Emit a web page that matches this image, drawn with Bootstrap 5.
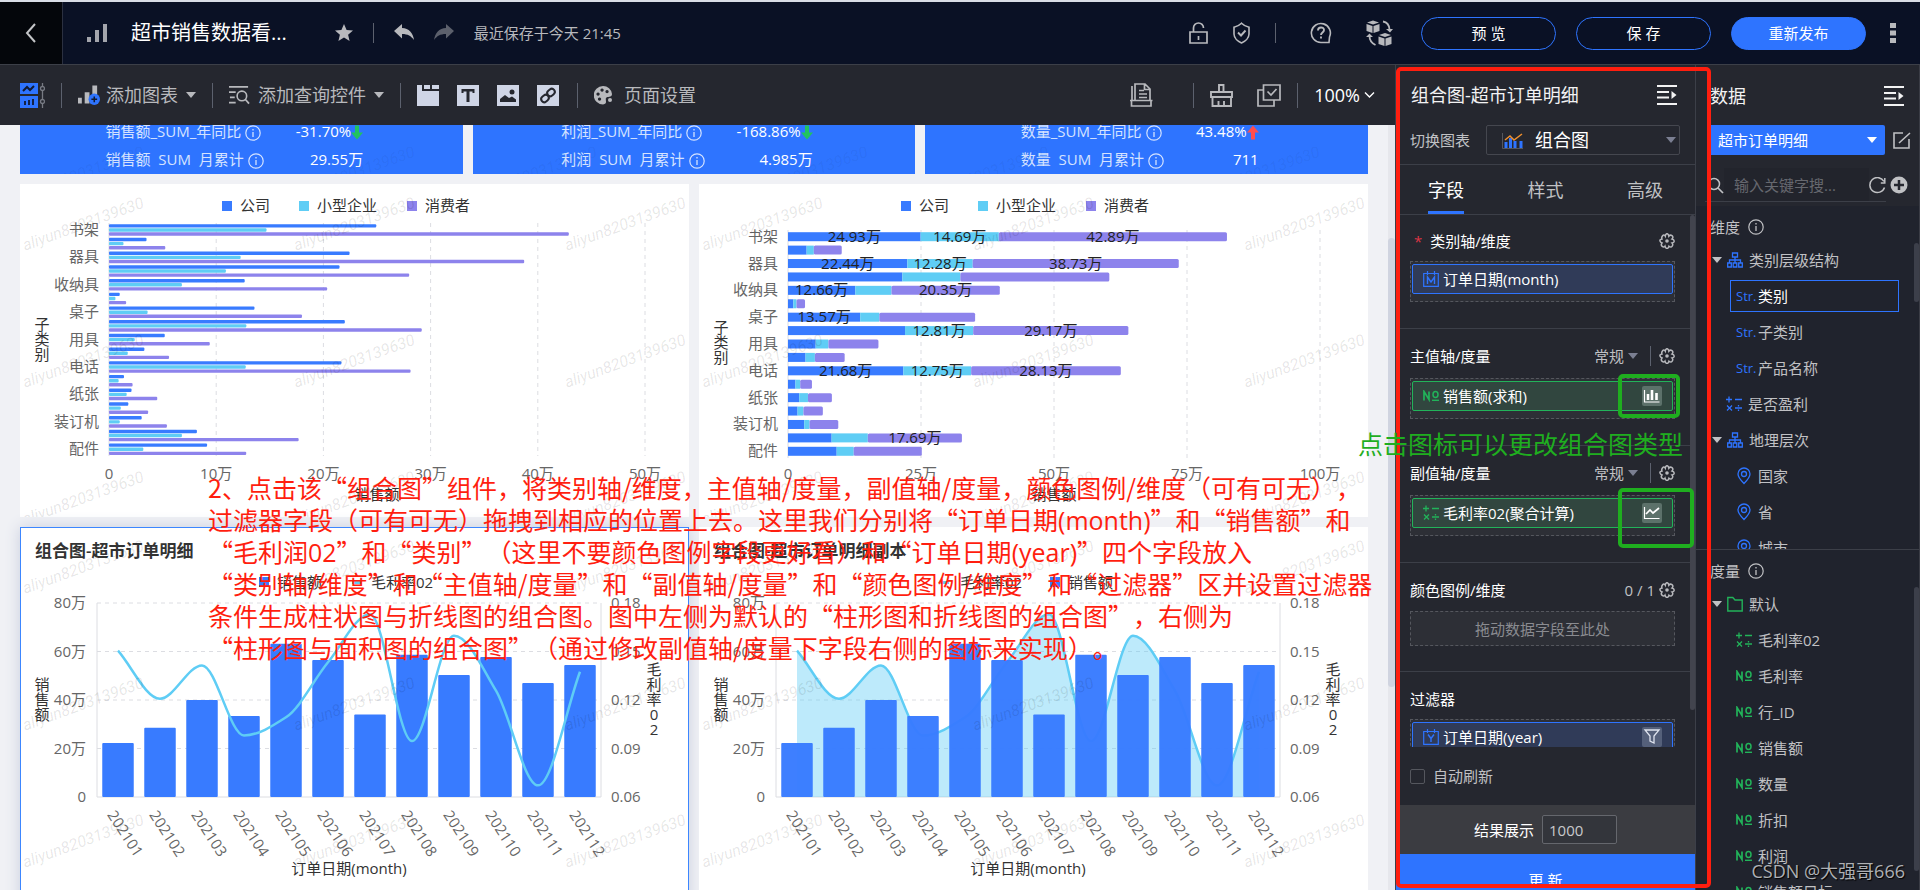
<!DOCTYPE html>
<html lang="zh-CN">
<head>
<meta charset="utf-8">
<meta name="viewport" content="width=device-width, initial-scale=1">
<title>超市销售数据看板</title>
<link href="https://cdn.jsdelivr.net/npm/bootstrap@5.3.0/dist/css/bootstrap.min.css" rel="stylesheet">
<style>
:root{--blue:#2e74ff;--green:#22b35a;--panel:#25272f;--line:#3c3f48;--txt:#c0c1c4}
body{font-family:"Open Sans","Noto Sans CJK SC",sans-serif;font-size:15px;line-height:20px;color:var(--txt);background:#0a1125;height:100vh;overflow:hidden}
button{font:inherit;color:inherit;background:none;border:0;padding:0;line-height:20px}
svg{display:block;flex:none}
.fs-lg{font-size:18px}
.fs-xl{font-size:20px}
.topbar{height:65px;border-top:2px solid #d9dde6;border-bottom:1px solid var(--line);background:#0a1125;color:#b8b9bd}
.back{width:63px;background:#04060b;border-right:1px solid #2b3040}
.vr-line{width:1px;height:20px;background:#5c616e;flex:none}
.gap-l20{margin-left:20px}
.gap-l34{margin-left:34px}
.gap-l40{margin-left:40px}
.ic{margin-right:6px}
.pill{width:135px;height:33px;border:1px solid var(--blue);border-radius:17px;color:#fff}
.pill-fill{background:var(--blue)}
.toolbar{height:60px;background:var(--panel);color:#b8b9bd}
.toolbar .vr-line{height:25px}
.caret{width:0;height:0;border:5px solid transparent;border-top:6px solid currentColor;border-bottom:0;flex:none}
.canvas{background:#f0f1f5;color:#333}
.board{margin:0 27px 0 20px}
.board-row{gap:10px}
.board-grid{gap:10px;grid-template-columns:1fr 1fr;margin-top:10px}
.sheet{background:#fff;height:333px;overflow:hidden}
.sheet-tall{height:400px}
.picked{outline:1px solid #3c86ff;outline-offset:-1px;box-shadow:0 0 14px #c9cede}
.kpi{height:49px;flex:1 1 0;padding-right:14px;background:var(--blue);color:#fff;overflow:hidden}
.kpi-rows{column-gap:32px;grid-template-columns:auto auto;grid-auto-rows:28px;align-items:center;margin-top:-8px}
.kpi-rows > span{height:20px}
.kpi-name{color:#d5e3ff}
.vscroll{right:0;top:0;bottom:0;width:7px;background:#e6e7ec}
.vscroll i{display:block;margin-top:113px;height:449px;border-radius:4px;background:#d0d4e0}
.note{font:25px/32px "Noto Sans CJK SC",sans-serif;font-kerning:none;text-spacing-trim:space-all;font-feature-settings:"chws" 0,"halt" 0;white-space:nowrap;pointer-events:none}
.note div{height:32px}
.note span{font-family:"Open Sans",sans-serif}
.note-red{left:208px;top:346px;color:#ff1e0f;z-index:3}
.note-green{right:12px;top:362px;color:#1fae1f;z-index:6}
.frame-red{left:0;right:-16px;top:2px;bottom:2px;border:4px solid #ff1e0f;border-radius:5px;z-index:5;pointer-events:none}
.frame-green{border:4px solid #1fae1f;border-radius:5px;z-index:6;pointer-events:none}
.frame-a{right:15px;top:309px;width:62px;height:44px}
.frame-b{right:1px;top:423px;width:76px;height:60px}
.conf{width:301px;background:var(--panel);border-left:1px solid var(--line);border-right:1px solid var(--line);flex:none}
.pane-head{height:60px;padding:0 18px 0 15px;color:#f2f2f3}
.switch-row{height:40px;padding:0 15px 9px 14px;border-bottom:1px solid var(--line)}
.pick{appearance:none;border:1px solid #45474f;border-radius:2px;background:transparent;color:#fff;height:30px;width:100%}
.pick option{color:#000}
.tabs{height:50px;border-bottom:1px solid var(--line);padding:0 32px}
.tabs button{border-bottom:3px solid transparent;padding-top:4px}
.tabs .on{color:#fff;border-color:var(--blue)}
.secs{overflow:hidden}
.sec-list{margin-right:5px}
.sec{border-bottom:1px solid var(--line);padding:16px 15px 0 14px;height:117px}
.sec-first{height:114px;padding-top:15px}
.sec-mid{height:109px}
.sec-head{height:22px;color:#fff;margin-bottom:11px}
.sec-tight .sec-head{margin-bottom:9px}
.zone{border:1px dashed #55575e;background:#2d2f36;height:41px;padding:2px 1px}
.zone-flat{height:35px;color:#8a8b90;line-height:31px;text-align:center;margin-top:-1px}
.chip{height:30px;border:1px solid var(--blue);border-radius:2px;background:#303b58;color:#fff;padding:0 10px}
.chip-g{border-color:var(--green);background:#31463f}
.chip-btn{width:20px;height:20px;background:#5c716a;border-radius:2px}
.chip-btn-b{background:#55607a}
.conf-bar{right:0;top:150px;width:5px;height:495px;background:#42444e;border-radius:3px}
.refresh{height:58px;padding:0 14px}
.box{appearance:none;width:15px;height:15px;border:1px solid #55575e;border-radius:2px;margin:0}
.result{height:49px;background:#3b3c41;color:#fff}
.num{width:75px;height:29px;border:1px solid #65676d;border-radius:2px;background:#33353b;color:#c8c9cc;padding:0 6px}
.update{height:36px;background:var(--blue);color:#fff;overflow:hidden;padding-top:15px}
.data{width:224px;background:var(--panel);flex:none;border-right:1px solid #3a3c45}
.data .pane-head{padding:2px 15px 0 14px}
.source{background:var(--blue);border:0;padding:0 10px}
.search{height:46px;margin-top:7px}
.search input{border:0;background:#22242c;color:#fff;width:145px;height:34px;padding:0 10px;outline:0}
.search input::placeholder{color:#66686f;opacity:1}
.search-line{border-bottom:1px solid var(--line);margin:-7px 33px 4px 9px}
.tree{background:#20232d;overflow:hidden}
.tree-dim{height:344px;flex:none;border-bottom:1px solid var(--line)}
.tree-head{height:36px;padding:6px 14px 0}
.tree ul{list-style:none;margin:0;padding:0}
.tree li{height:36px;padding-left:16px}
.tree li.l2{padding-left:40px}
.tree li.l1{padding-left:30px}
.tree .sel{height:32px;margin:2px 20px 2px 34px;padding-left:5px;border:1px solid var(--blue);color:#fff}
.tree .caret{margin-right:5px}
.ty{width:16px;font-size:13px;color:var(--blue);white-space:nowrap;flex:none}
.tree-bar{right:0;width:5px;background:#3c3f4a;border-radius:3px}
.bar-a{top:37px;height:59px}
.bar-b{top:37px;height:284px}
.credit{right:14px;bottom:9px;font-size:18px;color:#aeb0b4;text-shadow:1px 1px 1px #000}
.blue{color:var(--blue)}
.green{color:var(--green)}
.dim{color:#7b7f92}
</style>
</head>
<body class="d-flex flex-column">
<svg class="d-none">
 <symbol id="gear" viewBox="0 0 16 16"><path d="M6.300 3.200Q5 1 3.600 2.800T3 6Q.5 6.500 1 8t2 2Q1.500 12 3.200 13.400T6 13.200Q6.500 15.400 8 15.400T10 13.200Q12 15 13.200 13.200T13 10Q15.400 9.500 15.200 8T13 6Q14.800 4 13 2.700T9.800 3.200Q9.500.7 8 .7T6.300 3.200z" fill="none" stroke="currentColor" stroke-width="1.500"/><circle cx="8" cy="8" r="1.800" fill="currentColor"/></symbol>
 <symbol id="fold" viewBox="0 0 20 20"><path d="M0 1h20M0 7h12M0 12.500h12M0 19h20" stroke="currentColor" stroke-width="1.800" fill="none"/><path d="M14.500 6v8l5-4z" fill="currentColor"/></symbol>
 <symbol id="info" viewBox="0 0 16 16"><circle cx="8" cy="8" r="7.200" fill="none" stroke="currentColor" stroke-width="1.200"/><path d="M8 7v5M8 4v1.500" stroke="currentColor" stroke-width="1.300"/></symbol>
 <symbol id="calc" viewBox="0 0 16 16"><path d="M0 3.500h6M3 .5v6M9 3.500h7M1 9.500l5 5M6 9.500l-5 5M9 12h7M12.500 9v1.500M12.500 13.500v1.500" stroke="currentColor" stroke-width="1.300" fill="none"/></symbol>
 <symbol id="tree" viewBox="0 0 16 16"><path d="M5.500 1h5v4h-5zM.7 11h3.600v4H.7zM6.200 11h3.600v4H6.200zM11.700 11h3.600v4h-3.600zM8 5v6M2.500 11V8h11v3" stroke="currentColor" stroke-width="1.300" fill="none"/></symbol>
 <symbol id="pin" viewBox="0 0 16 18"><path d="M8 16.500C4 12.500 2 10 2 7a6 6 0 0 1 12 0c0 3-2 5.500-6 9.500z" stroke="currentColor" stroke-width="1.300" fill="none"/><circle cx="8" cy="7" r="2.500" stroke="currentColor" stroke-width="1.300" fill="none"/></symbol>
 <symbol id="no" viewBox="0 0 16 12"><path d="M1 10.500V1.500l5 8V1.500" stroke="currentColor" stroke-width="1.700" fill="none"/><ellipse cx="12.500" cy="4.500" rx="2.500" ry="3" stroke="currentColor" stroke-width="1.500" fill="none"/><path d="M9 10.300h7" stroke="currentColor" stroke-width="1.400"/></symbol>
 <symbol id="cal" viewBox="0 0 16 16"><path d="M.7 2.500h14.600v12.800H.7zM4.500 0v4M11.500 0v4" stroke="currentColor" stroke-width="1.200" fill="none"/></symbol>
 <symbol id="down" viewBox="0 0 12 14"><path d="M4 0h4v7h4l-6 7-6-7h4z" fill="currentColor"/></symbol>
 <symbol id="up" viewBox="0 0 12 14"><path d="M4 14h4V7h4L6 0 0 7h4z" fill="currentColor"/></symbol>
</svg>

<header class="topbar d-flex align-items-center flex-shrink-0">
 <button class="back h-100 d-flex align-items-center justify-content-center" aria-label="返回"><svg width="12" height="20" viewBox="0 0 12 20"><path d="M10 1L2 10l8 9" fill="none" stroke="#c4c5c8" stroke-width="2"/></svg></button>
 <svg class="ms-4" width="20" height="18" viewBox="0 0 20 18" fill="#a3a5ac"><path d="M0 13h4v5H0zM8 6h4v12H8zM16 0h4v18h-4z"/></svg>
 <span class="fs-xl text-white ms-4">超市销售数据看...</span>
 <button class="ms-5" aria-label="收藏"><svg width="18" height="18" viewBox="0 0 18 18"><path d="M9 0l2.600 6 6.400.5-4.900 4.200 1.500 6.300L9 13.600 3.400 17l1.500-6.300L0 6.500 6.400 6z" fill="currentColor"/></svg></button>
 <span class="vr-line gap-l20 me-3"></span>
 <button class="ms-1" aria-label="撤销"><svg width="20" height="18" viewBox="0 0 20 18"><path d="M8 0v4c7 0 11 5 12 12-3-4-6-6-12-6v4.500L0 7z" fill="currentColor"/></svg></button>
 <button class="gap-l20" aria-label="重做"><svg width="20" height="18" viewBox="0 0 20 18"><path d="M12 0v4C5 4 1 9 0 16c3-4 6-6 12-6v4.500L20 7z" fill="#5c606c"/></svg></button>
 <span class="gap-l20">最近保存于今天 21:45</span>
 <div class="ms-auto d-flex align-items-center">
  <svg width="19" height="22" viewBox="0 0 19 22"><path d="M1 10h17v11H1zM4.500 10V6a5 5 0 0 1 10 0M9.500 14v4" fill="none" stroke="currentColor" stroke-width="1.700"/></svg>
  <svg class="ms-4" width="19" height="22" viewBox="0 0 19 22"><path d="M9.500 1.200c2 2 4.500 3.300 7.500 4V12c0 4-4 7.500-7.500 9C6 19.500 2 16 2 12V5.200c3-.7 5.500-2 7.500-4z" fill="none" stroke="currentColor" stroke-width="1.600"/><path d="M6 10.500l3 3 4.500-5" fill="none" stroke="currentColor" stroke-width="1.900"/></svg>
  <span class="vr-line ms-4"></span>
  <svg class="gap-l34" width="22" height="22" viewBox="0 0 22 22"><path d="M19 20.500h-8a9.500 9.500 0 1 1 8.500-5.500z" fill="none" stroke="currentColor" stroke-width="1.600"/><path d="M8 8.500c0-4 6-4 6-.5 0 2.500-3 2.500-3 5M11 14.500v2" fill="none" stroke="currentColor" stroke-width="1.900"/></svg>
  <svg class="gap-l34 me-4" width="27" height="26" viewBox="9 0 27 26"><g fill="currentColor"><path d="M10 2.500l6-2 6 2-6 2zM9.500 4l6 2v7l-6-2zM22.500 4l-6 2v7l6-2zM22 15l6-2 6 2-6 2zM21.500 16.500l6 2V26l-6-2zM34.500 16.500l-6 2V26l6-2z"/><path d="M29 9h7l-3 3.500zM9 17h7l-3.500-3.500z"/></g><path d="M26 1.500q6 1 6.500 8M12.500 16q0 6 6 9" fill="none" stroke="currentColor" stroke-width="1.800"/></svg>
  <button class="pill ms-1">预 览</button>
  <button class="pill gap-l20">保 存</button>
  <button class="pill pill-fill gap-l20">重新发布</button>
  <button class="mx-4" aria-label="更多"><svg width="6" height="20" viewBox="0 0 6 20" fill="currentColor"><path d="M0 0h6v5H0zM0 7.500h6v5H0zM0 15h6v5H0z"/></svg></button>
 </div>
</header>

<div class="d-flex flex-grow-1 overflow-hidden">
<main class="flex-grow-1 d-flex flex-column overflow-hidden">
 <div class="toolbar d-flex align-items-center ps-3 pe-3 fs-lg flex-shrink-0">
  <svg class="ms-1" width="25" height="25" viewBox="0 0 25 25"><path d="M0 0h18v11H0zM0 13h18v12H0z" fill="#2e74ff"/><path d="M3 8l4-4 3 3 4-4" fill="none" stroke="#111a33" stroke-width="2"/><path d="M5 18v4M9 17v5M13 16v6" stroke="#111a33" stroke-width="1.800"/><path d="M22.500 0v25" stroke="#777a83" stroke-width="1.300"/><circle cx="22.500" cy="5.500" r="2" fill="#25272f" stroke="#777a83" stroke-width="1.300"/><circle cx="22.500" cy="18.500" r="2" fill="#25272f" stroke="#777a83" stroke-width="1.300"/></svg>
  <span class="vr-line mx-3"></span>
  <button class="d-flex align-items-center"><svg class="ic" width="22" height="22" viewBox="0 0 23 22"><path d="M0 14h4v6H0zM7 8h5v12H7zM15 1h5v14h-5z" fill="currentColor"/><circle cx="17" cy="15.500" r="6" fill="#2e74ff"/><path d="M17 12.500v6M14 15.500h6" stroke="#111a33" stroke-width="1.600"/></svg>添加图表<i class="caret mx-2"></i></button>
  <span class="vr-line ms-2 me-3"></span>
  <button class="d-flex align-items-center"><svg class="me-2" width="21" height="20" viewBox="0 0 22 20"><path d="M0 1.500h20M0 7h7M1 12.500h5M0 18h7" stroke="currentColor" stroke-width="1.600"/><circle cx="13.500" cy="11" r="5" fill="none" stroke="currentColor" stroke-width="1.700"/><path d="M17 14.500l4 4.500" stroke="currentColor" stroke-width="1.800"/></svg>添加查询控件<i class="caret mx-2"></i></button>
  <span class="vr-line ms-2 me-3"></span>
  <div class="d-flex gap-3">
  <button aria-label="选项卡"><svg width="24" height="21" viewBox="0 0 24 21"><path d="M0 0h5v6h17v15H0zM7 0h6v4H7zM15 0h7v4h-7z" fill="#cfd5e6"/></svg></button>
  <button aria-label="文本"><svg width="24" height="21" viewBox="0 0 24 21"><path d="M0 0h22v21H0z" fill="#cfd5e6"/><path d="M4.500 4h13v4h-2V6.500h-3V17h-3V6.500h-3V8h-2z" fill="#25272f"/></svg></button>
  <button aria-label="图片"><svg width="24" height="21" viewBox="0 0 24 21"><path d="M0 0h22v21H0z" fill="#cfd5e6"/><path d="M3 17v-3l5-4 4 3 3-1.500 4 3V17z" fill="#25272f"/><circle cx="15" cy="7" r="2.500" fill="#25272f"/></svg></button>
  <button aria-label="链接"><svg width="24" height="21" viewBox="0 0 24 21"><path d="M0 0h22v21H0z" fill="#cfd5e6"/><g fill="none" stroke="#25272f" stroke-width="2"><rect x="10" y="4.500" width="8" height="6" rx="3" transform="rotate(-40 14 7.500)"/><rect x="4" y="10.500" width="8" height="6" rx="3" transform="rotate(-40 8 13.500)"/></g></svg></button>
  </div>
  <span class="vr-line mx-3"></span>
  <button class="d-flex align-items-center"><svg class="me-2" width="22" height="19" viewBox="0 0 22 19"><path fill-rule="evenodd" d="M9 0a9 9 0 0 1 9 8c0 4-5 2-6 4s2 6-3 6.500A9 9 0 0 1 9 0zM8 2.500a1.600 1.600 0 1 0 .1 0zM13 4a1.600 1.600 0 1 0 .1 0zM4 6.500a1.600 1.600 0 1 0 .1 0zM5.500 11.500a1.600 1.600 0 1 0 .1 0z" fill="currentColor"/><circle cx="16" cy="14" r="2" fill="currentColor"/></svg>页面设置</button>
  <div class="ms-auto d-flex align-items-center">
   <svg width="23" height="24" viewBox="0 0 23 24"><path d="M5 17V1h10l5 5v11M2 3v14M0 17.500h22.500M1.500 18v5H21v-5M9 7.500h5M9 11h8M9 14.500h8M14.500 1v5.500H20" fill="none" stroke="currentColor" stroke-width="1.700"/></svg>
   <span class="vr-line gap-l40 me-3"></span>
   <svg width="23" height="23" viewBox="0 0 23 23"><path d="M9 8V1h4.500v7M1 8h21v5H1zM2.500 13v9H21v-9M8.500 22v-5M14 22v-5" fill="none" stroke="currentColor" stroke-width="1.900"/></svg>
   <svg class="ms-4 me-3" width="24" height="23" viewBox="0 0 24 23"><path d="M6.500 1H23v15H6.500zM6.500 6H1v16h16v-6M10.500 7.500l3.500 3.500 5.500-6" fill="none" stroke="currentColor" stroke-width="1.700"/></svg>
   <span class="vr-line me-3"></span>
   <button class="text-white d-flex align-items-center">100%<svg class="ms-1 me-1" width="11" height="8" viewBox="0 0 11 8"><path d="M1 1.500l4.500 4.500L10 1.500" fill="none" stroke="currentColor" stroke-width="1.400"/></svg></button>
  </div>
 </div>
 <div class="canvas flex-grow-1 position-relative overflow-hidden">
  <div class="board">
   <div class="d-flex board-row" id="kpis"></div>
   <div class="d-grid board-grid">
    <section class="sheet"><svg data-chart="group" width="100%" height="333"></svg></section>
    <section class="sheet"><svg data-chart="stack" width="100%" height="333"></svg></section>
    <section class="sheet sheet-tall picked"><svg data-chart="line" width="100%" height="400"></svg></section>
    <section class="sheet sheet-tall"><svg data-chart="area" width="100%" height="400"></svg></section>
   </div>
  </div>
  <div class="vscroll position-absolute"><i></i></div>
  <div class="note note-red position-absolute">
   <div>2、点击该“组合图”组件，将类别轴/维度，主值轴/度量，副值轴/度量，颜色图例/维度（可有可无），</div>
   <div>过滤器字段（可有可无）拖拽到相应的位置上去。这里我们分别将“订单日期<span>(month)</span>”和“销售额”和</div>
   <div>“毛利润<span>02</span>”和“类别”（这里不要颜色图例字段更好看）和“订单日期<span>(year)</span>”四个字段放入</div>
   <div>“类别轴/维度”和“主值轴/度量”和“副值轴/度量”和“颜色图例/维度”和“过滤器”区并设置过滤器</div>
   <div>条件生成柱状图与折线图的组合图。图中左侧为默认的“柱形图和折线图的组合图”，右侧为</div>
   <div>“柱形图与面积图的组合图”（通过修改副值轴/度量下字段右侧的图标来实现）。</div>
  </div>
 </div>
</main>

<aside class="conf position-relative d-flex flex-column">
 <div class="pane-head fs-lg d-flex align-items-center justify-content-between flex-shrink-0">组合图-超市订单明细<button aria-label="收起"><svg width="20" height="20"><use href="#fold"/></svg></button></div>
 <div class="switch-row d-flex align-items-center flex-shrink-0">
  <label for="kind" class="text-nowrap me-3">切换图表</label>
  <div class="position-relative flex-grow-1">
   <select id="kind" class="pick fs-lg ps-5"><option>组合图</option></select>
   <svg class="position-absolute start-0 top-0 mt-2 ms-3" width="21" height="16" viewBox="0 0 21 16"><path d="M.5 0v15.500H21" fill="none" stroke="#55575e"/><path d="M4 15V9M8.500 15V5M13 15V8M19 15V8" stroke="#2e74ff" stroke-width="3"/><path d="M3 7l5-4 4 4 8-6" fill="none" stroke="#f0902e" stroke-width="1.500"/></svg>
   <i class="caret dim position-absolute end-0 top-50 translate-middle-y me-1"></i>
  </div>
 </div>
 <div class="tabs fs-lg d-flex justify-content-between flex-shrink-0" role="tablist"><button class="on" role="tab">字段</button><button role="tab">样式</button><button role="tab">高级</button></div>
 <div class="secs flex-grow-1"><div class="sec-list">
  <div class="sec sec-first sec-tight"><div class="sec-head d-flex align-items-center"><b class="text-danger ms-1 me-2 fw-normal">*</b>类别轴/维度<svg class="ms-auto" width="16" height="16" color="#b8b9bd"><use href="#gear"/></svg></div>
   <div class="zone"><div class="chip d-flex align-items-center"><svg class="blue" width="16" height="16" viewBox="0 0 16 16"><use href="#cal"/><path d="M4.500 13V6l3.500 5 3.500-5v7" fill="none" stroke="currentColor" stroke-width="1.400"/></svg><span class="ms-1">订单日期(month)</span></div></div></div>
  <div class="sec"><div class="sec-head d-flex align-items-center">主值轴/度量<span class="ms-auto" style="color:var(--txt)">常规</span><i class="caret dim ms-1 me-2"></i><span class="vr-line mx-1"></span><svg class="ms-1" width="16" height="16" color="#b8b9bd"><use href="#gear"/></svg></div>
   <div class="zone"><div class="chip chip-g d-flex align-items-center"><svg class="green" width="16" height="12"><use href="#no"/></svg><span class="ms-1">销售额(求和)</span><button class="chip-btn ms-auto" aria-label="柱形图"><svg width="20" height="20" viewBox="0 0 20 20"><path d="M2.500 4v12h15" stroke="#fff" stroke-width="1.200" fill="none"/><path d="M6 14V8M10 14V4M14.500 14V7" stroke="#fff" stroke-width="2.600"/></svg></button></div></div></div>
  <div class="sec"><div class="sec-head d-flex align-items-center">副值轴/度量<span class="ms-auto" style="color:var(--txt)">常规</span><i class="caret dim ms-1 me-2"></i><span class="vr-line mx-1"></span><svg class="ms-1" width="16" height="16" color="#b8b9bd"><use href="#gear"/></svg></div>
   <div class="zone"><div class="chip chip-g d-flex align-items-center"><svg class="green" width="16" height="16"><use href="#calc"/></svg><span class="ms-1">毛利率02(聚合计算)</span><button class="chip-btn ms-auto" aria-label="折线图"><svg width="20" height="20" viewBox="0 0 20 20"><path d="M2.500 4v11.500h15" stroke="#fff" stroke-width="1.200" fill="none"/><path d="M4 11l4-4 3 3 6-5" stroke="#fff" stroke-width="1.700" fill="none"/></svg></button></div></div></div>
  <div class="sec sec-mid"><div class="sec-head d-flex align-items-center">颜色图例/维度<span class="ms-auto me-1" style="color:var(--txt)">0 / 1</span><svg width="16" height="16" color="#b8b9bd"><use href="#gear"/></svg></div>
   <div class="zone zone-flat">拖动数据字段至此处</div></div>
  <div class="sec sec-tight"><div class="sec-head d-flex align-items-center">过滤器</div>
   <div class="zone"><div class="chip d-flex align-items-center"><svg class="blue" width="16" height="16" viewBox="0 0 16 16"><use href="#cal"/><path d="M5 5.500l3 4 3-4M8 9v4" fill="none" stroke="currentColor" stroke-width="1.400"/></svg><span class="ms-1">订单日期(year)</span><button class="chip-btn chip-btn-b ms-auto" aria-label="筛选"><svg width="20" height="20" viewBox="0 0 20 20"><path d="M3 3h14l-5 6v7l-4-2V9z" stroke="#dfe3ee" stroke-width="1.300" fill="none"/></svg></button></div></div></div>
 </div></div>
 <div class="refresh d-flex align-items-center flex-shrink-0"><input class="box" type="checkbox" id="auto"><label for="auto" class="ms-2">自动刷新</label></div>
 <div class="result d-flex align-items-center justify-content-center flex-shrink-0"><label for="rows" class="me-2">结果展示</label><input id="rows" class="num" value="1000"></div>
 <button class="update flex-shrink-0">更 新</button>
 <div class="conf-bar position-absolute"></div>
 <div class="frame-red position-absolute"></div>
 <div class="frame-green frame-a position-absolute"></div>
 <div class="frame-green frame-b position-absolute"></div>
 <div class="note note-green position-absolute">点击图标可以更改组合图类型</div>
</aside>

<aside class="data d-flex flex-column position-relative">
 <div class="pane-head fs-lg d-flex align-items-center justify-content-between flex-shrink-0">数据<button aria-label="收起"><svg width="20" height="20"><use href="#fold"/></svg></button></div>
 <div class="d-flex align-items-center ps-2 flex-shrink-0">
  <div class="position-relative flex-grow-1 ms-1"><select class="pick source" aria-label="数据集"><option>超市订单明细</option></select><i class="caret position-absolute end-0 top-50 translate-middle-y me-2 text-white"></i></div>
  <svg class="ms-2 me-2" width="18" height="17" viewBox="0 0 18 17"><path d="M10 1H1v15h15V7M6 11L17 1" fill="none" stroke="currentColor" stroke-width="1.600"/></svg>
 </div>
 <div class="search d-flex align-items-center ps-2 flex-shrink-0"><svg class="ms-1" width="16" height="17" viewBox="0 0 16 17"><circle cx="6" cy="7" r="5.500" fill="none" stroke="currentColor" stroke-width="1.500"/><path d="M10 11l5 5" stroke="currentColor" stroke-width="1.700"/></svg><input type="search" placeholder="输入关键字搜..." aria-label="搜索"><svg width="17" height="17" viewBox="0 0 17 17"><path d="M15 4.500a7.500 7.500 0 1 0 .5 6M15.800 1v5h-4" fill="none" stroke="currentColor" stroke-width="1.500"/></svg><svg class="ms-1" width="18" height="18" viewBox="0 0 18 18"><circle cx="9" cy="9" r="8.500" fill="currentColor"/><path d="M9 4v10M4 9h10" stroke="#25272f" stroke-width="2.500"/></svg></div>
 <div class="search-line"></div>
 <div class="tree tree-dim position-relative">
  <div class="tree-head d-flex align-items-center">维度<svg class="ms-2" width="16" height="16"><use href="#info"/></svg></div>
  <ul>
   <li class="d-flex align-items-center"><i class="caret"></i><svg class="blue ic" width="16" height="16"><use href="#tree"/></svg>类别层级结构</li>
   <li class="d-flex align-items-center sel"><span class="ty ic">Str.</span>类别</li>
   <li class="d-flex align-items-center l2"><span class="ty ic">Str.</span>子类别</li>
   <li class="d-flex align-items-center l2"><span class="ty ic">Str.</span>产品名称</li>
   <li class="d-flex align-items-center l1"><svg class="blue ic" width="16" height="16"><use href="#calc"/></svg>是否盈利</li>
   <li class="d-flex align-items-center"><i class="caret"></i><svg class="blue ic" width="16" height="16"><use href="#tree"/></svg>地理层次</li>
   <li class="d-flex align-items-center l2"><svg class="blue ic" width="16" height="18"><use href="#pin"/></svg>国家</li>
   <li class="d-flex align-items-center l2"><svg class="blue ic" width="16" height="18"><use href="#pin"/></svg>省</li>
   <li class="d-flex align-items-center l2"><svg class="blue ic" width="16" height="18"><use href="#pin"/></svg>城市</li>
  </ul>
  <div class="tree-bar bar-a position-absolute"></div>
 </div>
 <div class="tree flex-grow-1 position-relative">
  <div class="tree-head d-flex align-items-center">度量<svg class="ms-2" width="16" height="16"><use href="#info"/></svg></div>
  <ul id="measures">
   <li class="d-flex align-items-center"><i class="caret"></i><svg class="green ic" width="16" height="16" viewBox="0 0 16 16"><path d="M.8 15V1.500h5L8 4h7.200v11z" fill="none" stroke="currentColor" stroke-width="1.400"/></svg>默认</li>
   <li class="d-flex align-items-center l2"><svg class="green ic" width="16" height="16"><use href="#calc"/></svg>毛利率02</li>
  </ul>
  <div class="tree-bar bar-b position-absolute"></div>
 </div>
 <div class="credit position-absolute text-nowrap">CSDN @大强哥666</div>
</aside>
</div>

<script src="https://cdn.jsdelivr.net/npm/bootstrap@5.3.0/dist/js/bootstrap.bundle.min.js"></script>
<script>
const BLUE='#387bff',CYAN='#5fcdf5',PURPLE='#8d83ec';
for(const n of ['毛利率','行_ID','销售额','数量','折扣','利润','销售额目标'])
 document.getElementById('measures').insertAdjacentHTML('beforeend',`<li class="d-flex align-items-center l2"><svg class="green ic" width="16" height="12"><use href="#no"/></svg>${n}</li>`);
const mark=(x,y,o)=>`<text x="${x}" y="${y}" text-anchor="middle" font-size="16" font-family="Roboto, sans-serif" font-style="italic" fill="#000" fill-opacity="${o}" transform="rotate(-20 ${x} ${y})">aliyun8203139630</text>`;
const info='<svg class="d-inline-block align-text-bottom ms-1" width="16" height="16"><use href="#info"/></svg>';
for(const [n,a,up,b] of [['销售额','-31.70%',0,'29.55万'],['利润','-168.86%',0,'4.985万'],['数量','43.48%',1,'711']])
 document.getElementById('kpis').insertAdjacentHTML('beforeend',`<div class="kpi d-flex justify-content-center position-relative"><svg class="position-absolute start-0 top-0" width="100%" height="49">${mark(65,53,.05)}${mark(336,53,.05)}</svg><div class="kpi-rows d-grid"><span class="kpi-name">${n}_SUM_年同比${info}</span><span class="text-end">${a}<svg class="d-inline-block align-text-bottom" width="12" height="17" color="${up?'#ff4d4f':'#22c35e'}"><use href="#${up?'up':'down'}"/></svg></span><span class="kpi-name">${n}&nbsp; SUM&nbsp; 月累计${info}</span><span class="text-end">${b}</span></div></div>`);

const rows=[[24.93,14.69,42.89],[3.5,1.35,5.25],[22.44,12.28,38.73],[21.5,10.9,28],[12.66,6.8,20.35],[1,.6,1.6],[13.57,3.6,18],[22,12.81,29.17],[5.2,2.4,9.4],[3.3,1.75,5.6],[21.68,12.75,28.13],[1.4,.9,2.2],[2.1,1.65,4.5],[1.8,1.1,3.65],[3.05,1,5.4],[8.2,6.8,17.69],[9.15,3.2,12.8]];
const cats=['书架','器具','收纳具','桌子','用具','电话','纸张','装订机','配件'];
const labelled={0:[1,1,1],2:[1,1,1],4:[1,0,1],6:[1,0,0],7:[0,1,1],10:[1,1,1],15:[0,0,1]};
const sales=[22.3,28.6,40,33.4,63.2,56.5,34,58.7,50.3,57.7,47,54.4];
const rate=[.1505,.1208,.1414,.0981,.1093,.1433,.173,.0946,.1598,.1258,.0672,.1375];
const T=(x,y,s,o='')=>`<text x="${x}" y="${y+5}" ${o}>${s}</text>`;
const R=(x,y,w,h,f,o='')=>`<rect x="${x}" y="${y}" width="${w}" height="${h}" fill="${f}" ${o}/>`;
const mid='text-anchor="middle"',end='text-anchor="end"',dark='fill="#333"';
const column=(x,y,s)=>[...s].map((c,i)=>T(x,y+15*i,c,mid+' '+dark)).join('');
const marks=W=>{let s='';for(let y=41;y<420;y+=137)for(let x=65;x<W;x+=271)s+=mark(x,y+4,.1);return s};
/* monotone cubic through the points */
function curve(p){
 const n=p.length,d=[],m=[];
 for(let i=0;i<n-1;i++)d[i]=(p[i+1][1]-p[i][1])/(p[i+1][0]-p[i][0]);
 m[0]=d[0];m[n-1]=d[n-2];
 for(let i=1;i<n-1;i++)m[i]=d[i-1]*d[i]<=0?0:2*d[i-1]*d[i]/(d[i-1]+d[i]);
 let s=`M${p[0]}`;
 for(let i=0;i<n-1;i++){const h=(p[i+1][0]-p[i][0])/3;s+=`C${p[i][0]+h},${p[i][1]+m[i]*h} ${p[i+1][0]-h},${p[i+1][1]-m[i+1]*h} ${p[i+1]}`}
 return s;
}
function bars(W,stack){
 const x0=89,top=stack?46:39,bot=stack?274:272,x1=W-(stack?48:44),max=stack?100:50,step=stack?25:10,k=(x1-x0)/max,h=(bot-top)/17;
 let s='';
 [[202,'公司',BLUE],[279,'小型企业',CYAN],[387,'消费者',PURPLE]].forEach(([x,t,c])=>s+=R(x,17,10,10,c)+T(x+18,22,t,dark));
 for(let v=0;v<=max;v+=step){const x=x0+v*k;s+=`<path d="M${x} ${top}V${bot}" stroke="#dcdde2" ${v?'stroke-dasharray="4 4"':''}/>`+T(x,290,v?v+'万':'0',mid)}
 s+=T((x0+x1)/2,311,'销售额',mid+' '+dark)+column(22,stack?144:141,'子类别');
 let lab='';
 rows.forEach((r,i)=>{
  const y=top+h*(i+.5);
  if(i%2==0)s+=T(79,y,cats[i/2],end);
  let x=x0;
  r.forEach((v,j)=>{const c=[BLUE,CYAN,PURPLE][j];
   if(stack){s+=R(x,y-4.5,v*k,9,c,j==2?'rx="1.5"':'');if(labelled[i]&&labelled[i][j])lab+=T(x+v*k/2,y,v.toFixed(2)+'万',mid+' fill="#222"');x+=v*k}
   else s+=R(x0,y-5.700+4.100*j,v*k,3.400,c,'rx="1"')});
 });
 return s+lab;
}
function combo(W,area){
 const x0=77,x1=W-88,top=76,bot=270,H=bot-top,step=(x1-x0)/12;
 let s=T(15,25,area?'组合图-超市订单明细副本':'组合图-超市订单明细','font-size="17" font-weight="600" fill="#333"');
 if(area)s+=R(241,54,9,3,CYAN)+T(261,56,'毛利率02',dark)+R(351,50,10,10,BLUE)+T(369,56,'销售额',dark);
 else s+=R(239,50,10,10,BLUE)+T(257,56,'销售额',dark)+R(332,54,10,3,CYAN)+T(351,56,'毛利率02',dark);
 for(let i=0;i<5;i++){const y=top+H*i/4;
  s+=`<path d="M${x0} ${y}H${x1}" stroke="#dcdde2" ${i<4?'stroke-dasharray="4 4"':''}/>`;
  s+=T(66,y,i<4?80-20*i+'万':'0',end)+T(x1+10,y,(.18-.03*i).toFixed(2));}
 s+=`<path d="M${x0} ${top}V${bot}M${x1} ${top}V${bot}" stroke="#dcdde2"/>`;
 s+=column(22,158,'销售额')+column(x1+53,143,'毛利率02')+T((x0+x1)/2,342,'订单日期(month)',mid+' '+dark);
 const cx=i=>x0+step*(i+.5),pts=rate.map((v,i)=>[cx(i),bot-(v-.06)/.12*H]),d=curve(pts);
 const b=sales.map((v,i)=>R(cx(i)-step*.375,bot-v/80*H,step*.75,v/80*H,BLUE,'rx="1"'+(area?' fill-opacity=".97"':''))).join('');
 const line=`<path d="${d}" fill="none" stroke="${CYAN}" stroke-width="2.500"/>`;
 s+=area?`<path d="${d}V${bot}H${cx(0)}Z" fill="#5bcbf5" fill-opacity=".4"/>${line}${b}`:b+line;
 sales.forEach((v,i)=>{const x=cx(i)-7,y=285;s+=`<text transform="translate(${x} ${y}) rotate(57)" y="5">2021${String(i+1).padStart(2,'0')}</text>`});
 return s;
}
function draw(){
 document.querySelectorAll('[data-chart]').forEach(e=>{
  const W=e.parentNode.clientWidth,t=e.dataset.chart;
  e.innerHTML=`<g font-size="15" fill="#666">${t=='group'||t=='stack'?bars(W,t=='stack'):combo(W,t=='area')}</g>`+marks(W);
 });
}
draw();addEventListener('resize',draw);
</script>
</body>
</html>
